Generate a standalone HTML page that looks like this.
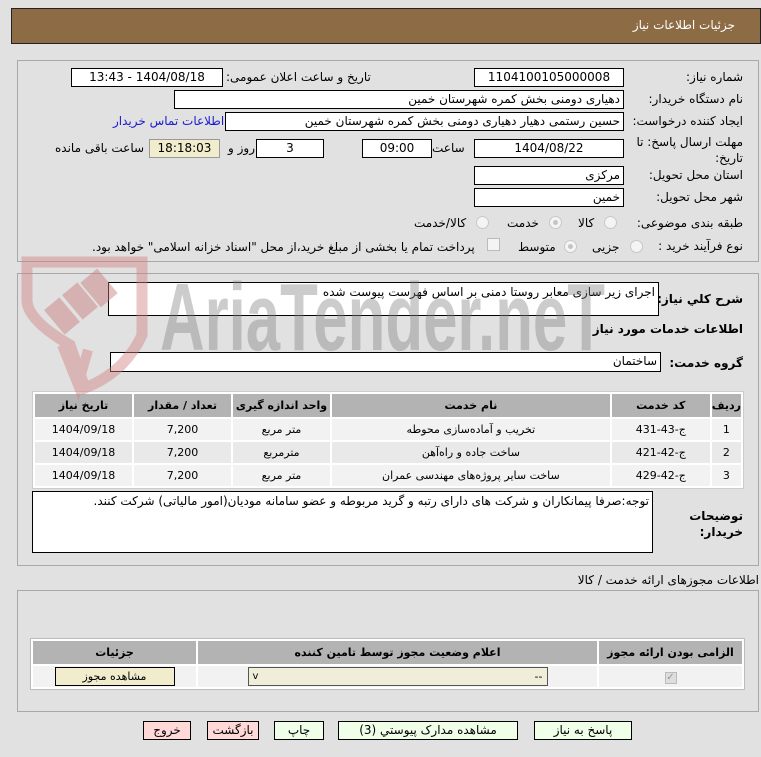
<!DOCTYPE html>
<html><head><meta charset="utf-8">
<style>
*{box-sizing:border-box;margin:0;padding:0}
body{width:761px;height:757px;background:#e1e1e1;font-family:Tahoma,"DejaVu Sans","Liberation Sans",sans-serif;font-size:12px;color:#000;position:relative;overflow:hidden;direction:rtl}
.a{position:absolute;white-space:nowrap}
.box{position:absolute;background:#fff;border:1px solid #000;height:19px;line-height:17px;text-align:center;font-size:12px}
.lbl{position:absolute;white-space:nowrap;font-size:12px;line-height:18px}
.panel{position:absolute;border:1px solid #a8a8a8}
.rad{position:absolute;width:13px;height:13px;border-radius:50%;border:1px solid #c8c8c8;background:#f4f4f4}
.rad.on::after{content:"";position:absolute;left:3px;top:3px;width:5px;height:5px;border-radius:50%;background:#c4c4c4}
table{border-collapse:separate;border-spacing:2px;position:absolute;background:#fff;border:1px solid #ccc}
th{background:#b3b3b3;font-weight:bold;font-size:11px;height:23px}
td{background:#f2f2f2;text-align:center;height:21px;font-size:11px}
tr.alt td{background:#e9e9e9}
.btn{position:absolute;height:19px;border:1px solid #000;line-height:17px;text-align:center;font-size:12px;background:#efffe8}
.b{font-weight:bold;font-size:12px}
</style></head><body>

<div class="a" style="left:11px;top:8px;width:750px;height:36px;background:#8c6b45;border:1px solid #222"></div>
<div class="a" style="right:26px;top:18px;color:#fff;font-size:12px">جزئیات اطلاعات نیاز</div>

<div class="panel" style="left:17px;top:60px;width:742px;height:202px"></div>
<div class="lbl" style="right:18px;top:68px">شماره نیاز:</div>
<div class="box" style="left:474px;top:68px;width:150px">1104100105000008</div>
<div class="lbl" style="left:226px;top:68px">تاریخ و ساعت اعلان عمومی:</div>
<div class="box" style="left:71px;top:68px;width:152px">1404/08/18 - 13:43</div>
<div class="lbl" style="right:18px;top:90px">نام دستگاه خریدار:</div>
<div class="box" style="left:174px;top:90px;width:450px;text-align:right;padding-right:3px">دهیاری دومنی بخش کمره شهرستان خمین</div>
<div class="lbl" style="right:18px;top:112px">ایجاد کننده درخواست:</div>
<div class="box" style="left:225px;top:112px;width:399px;text-align:right;padding-right:3px">حسین رستمی دهیار دهیاری دومنی بخش کمره شهرستان خمین</div>
<div class="lbl" style="left:113px;top:112px;color:#1a1ad0">اطلاعات تماس خریدار</div>
<div class="lbl" style="right:18px;top:134px;line-height:16px;width:115px;white-space:normal">مهلت ارسال پاسخ: تا تاریخ:</div>
<div class="box" style="left:474px;top:139px;width:150px">1404/08/22</div>
<div class="lbl" style="left:432px;top:139px">ساعت</div>
<div class="box" style="left:362px;top:139px;width:70px">09:00</div>
<div class="box" style="left:256px;top:139px;width:68px">3</div>
<div class="lbl" style="left:228px;top:139px">روز و</div>
<div class="box" style="left:149px;top:139px;width:71px;background:#f0eccc;border-color:#999">18:18:03</div>
<div class="lbl" style="left:55px;top:139px">ساعت باقی مانده</div>
<div class="lbl" style="right:18px;top:166px">استان محل تحویل:</div>
<div class="box" style="left:474px;top:166px;width:150px;text-align:right;padding-right:3px">مرکزی</div>
<div class="lbl" style="right:18px;top:188px">شهر محل تحویل:</div>
<div class="box" style="left:474px;top:188px;width:150px;text-align:right;padding-right:3px">خمین</div>
<div class="lbl" style="right:18px;top:214px">طبقه بندی موضوعی:</div>
<div class="rad" style="left:604px;top:216px"></div><div class="lbl" style="left:578px;top:214px">کالا</div>
<div class="rad on" style="left:549px;top:216px"></div><div class="lbl" style="left:507px;top:214px">خدمت</div>
<div class="rad" style="left:476px;top:216px"></div><div class="lbl" style="left:414px;top:214px">کالا/خدمت</div>
<div class="lbl" style="right:18px;top:237px">نوع فرآیند خرید :</div>
<div class="rad" style="left:630px;top:240px"></div><div class="lbl" style="left:592px;top:238px">جزیی</div>
<div class="rad on" style="left:564px;top:240px"></div><div class="lbl" style="left:518px;top:238px">متوسط</div>
<div class="a" style="left:487px;top:238px;width:13px;height:13px;border:1px solid #bbb;background:#f4f4f4"></div>
<div class="lbl" style="left:92px;top:238px">پرداخت تمام یا بخشی از مبلغ خرید،از محل "اسناد خزانه اسلامی" خواهد بود.</div>

<div class="panel" style="left:17px;top:273px;width:742px;height:293px"></div>
<div class="lbl b" style="right:18px;top:290px">شرح کلي نیاز:</div>
<div class="a" style="left:108px;top:282px;width:551px;height:34px;background:#fff;border:1px solid #000;text-align:right;padding:2px 3px;font-size:12px">اجرای زیر سازی معابر روستا دمنی بر اساس فهرست پیوست شده</div>
<div class="lbl b" style="right:18px;top:320px">اطلاعات خدمات مورد نیاز</div>
<div class="lbl b" style="right:18px;top:354px">گروه خدمت:</div>
<div class="a" style="left:110px;top:352px;width:551px;height:20px;background:#fff;border:1px solid #000;text-align:right;padding:1px 3px">ساختمان</div>
<table style="left:32px;top:391px;width:712px">
<tr><th style="width:26px">ردیف</th><th style="width:98px">کد خدمت</th><th>نام خدمت</th><th style="width:97px">واحد اندازه گیری</th><th style="width:97px">تعداد / مقدار</th><th style="width:97px">تاریخ نیاز</th></tr>
<tr><td>1</td><td>ج-43-431</td><td>تخریب و آماده‌سازی محوطه</td><td>متر مربع</td><td>7,200</td><td>1404/09/18</td></tr>
<tr class="alt"><td>2</td><td>ج-42-421</td><td>ساخت جاده و راه‌آهن</td><td>مترمربع</td><td>7,200</td><td>1404/09/18</td></tr>
<tr><td>3</td><td>ج-42-429</td><td>ساخت سایر پروژه‌های مهندسی عمران</td><td>متر مربع</td><td>7,200</td><td>1404/09/18</td></tr>
</table>
<div class="a" style="left:32px;top:491px;width:621px;height:62px;background:#fff;border:1px solid #000;text-align:right;padding:2px 3px">توجه:صرفا پیمانکاران و شرکت های دارای رتبه و گرید مربوطه و عضو سامانه مودیان(امور مالیاتی) شرکت کنند.</div>
<div class="lbl b" style="right:18px;top:508px;line-height:16px;text-align:right">توضیحات<br>خریدار:</div>

<div class="lbl" style="right:2px;top:571px">اطلاعات مجوزهای ارائه خدمت / کالا</div>
<div class="panel" style="left:17px;top:590px;width:742px;height:122px"></div>
<table style="left:30px;top:638px;width:715px;border-color:#bbb">
<tr><th style="width:143px">الزامی بودن ارائه مجوز</th><th>اعلام وضعیت مجوز توسط تامین کننده</th><th style="width:163px">جزئیات</th></tr>
<tr><td><span style="display:inline-block;width:12px;height:12px;background:#ddd;border:1px solid #bbb;color:#999;font-size:10px;line-height:10px">✓</span></td>
<td><div style="margin:0 auto;width:300px;height:19px;background:#f0eed8;border:1px solid #555;text-align:right;padding:0 4px;line-height:17px;position:relative">--<span style="position:absolute;left:4px;font-size:10px">v</span></div></td>
<td><div style="margin:0 auto;width:120px;height:19px;background:#f0eccc;border:1px solid #000;line-height:17px">مشاهده مجوز</div></td></tr>
</table>

<div class="btn" style="left:534px;top:721px;width:98px">پاسخ به نیاز</div>
<div class="btn" style="left:338px;top:721px;width:180px">مشاهده مدارک پیوستي (3)</div>
<div class="btn" style="left:274px;top:721px;width:50px">چاپ</div>
<div class="btn" style="left:207px;top:721px;width:52px;background:#ffd8d8">بازگشت</div>
<div class="btn" style="left:143px;top:721px;width:48px;background:#ffd8d8">خروج</div>

<!-- watermark overlay -->
<svg class="a" style="left:0;top:0;pointer-events:none" width="761" height="757">
<g opacity="0.45">
<path d="M27 262 L142 262 L142 335 Q125 372 85 388 L70 345 Q27 320 27 300 Z" fill="none" stroke="#d08080" stroke-width="11"/>
<path d="M62 345 L78 385 L88 350" fill="none" stroke="#d08080" stroke-width="10"/>
<rect x="52" y="300" width="20" height="32" fill="#c87878" transform="rotate(-40 62 316)"/>
<rect x="70" y="285" width="20" height="32" fill="#c87878" transform="rotate(-40 80 301)"/>
<rect x="88" y="272" width="22" height="32" fill="#c87878" transform="rotate(-40 99 288)"/>
</g>
<text x="160" y="350" font-family="Liberation Sans Narrow,Liberation Sans,sans-serif" font-weight="bold" font-size="96" fill="#808080" fill-opacity="0.4" textLength="445" lengthAdjust="spacingAndGlyphs" direction="ltr" unicode-bidi="bidi-override">AriaTender.neT</text>
</svg>
</body></html>
